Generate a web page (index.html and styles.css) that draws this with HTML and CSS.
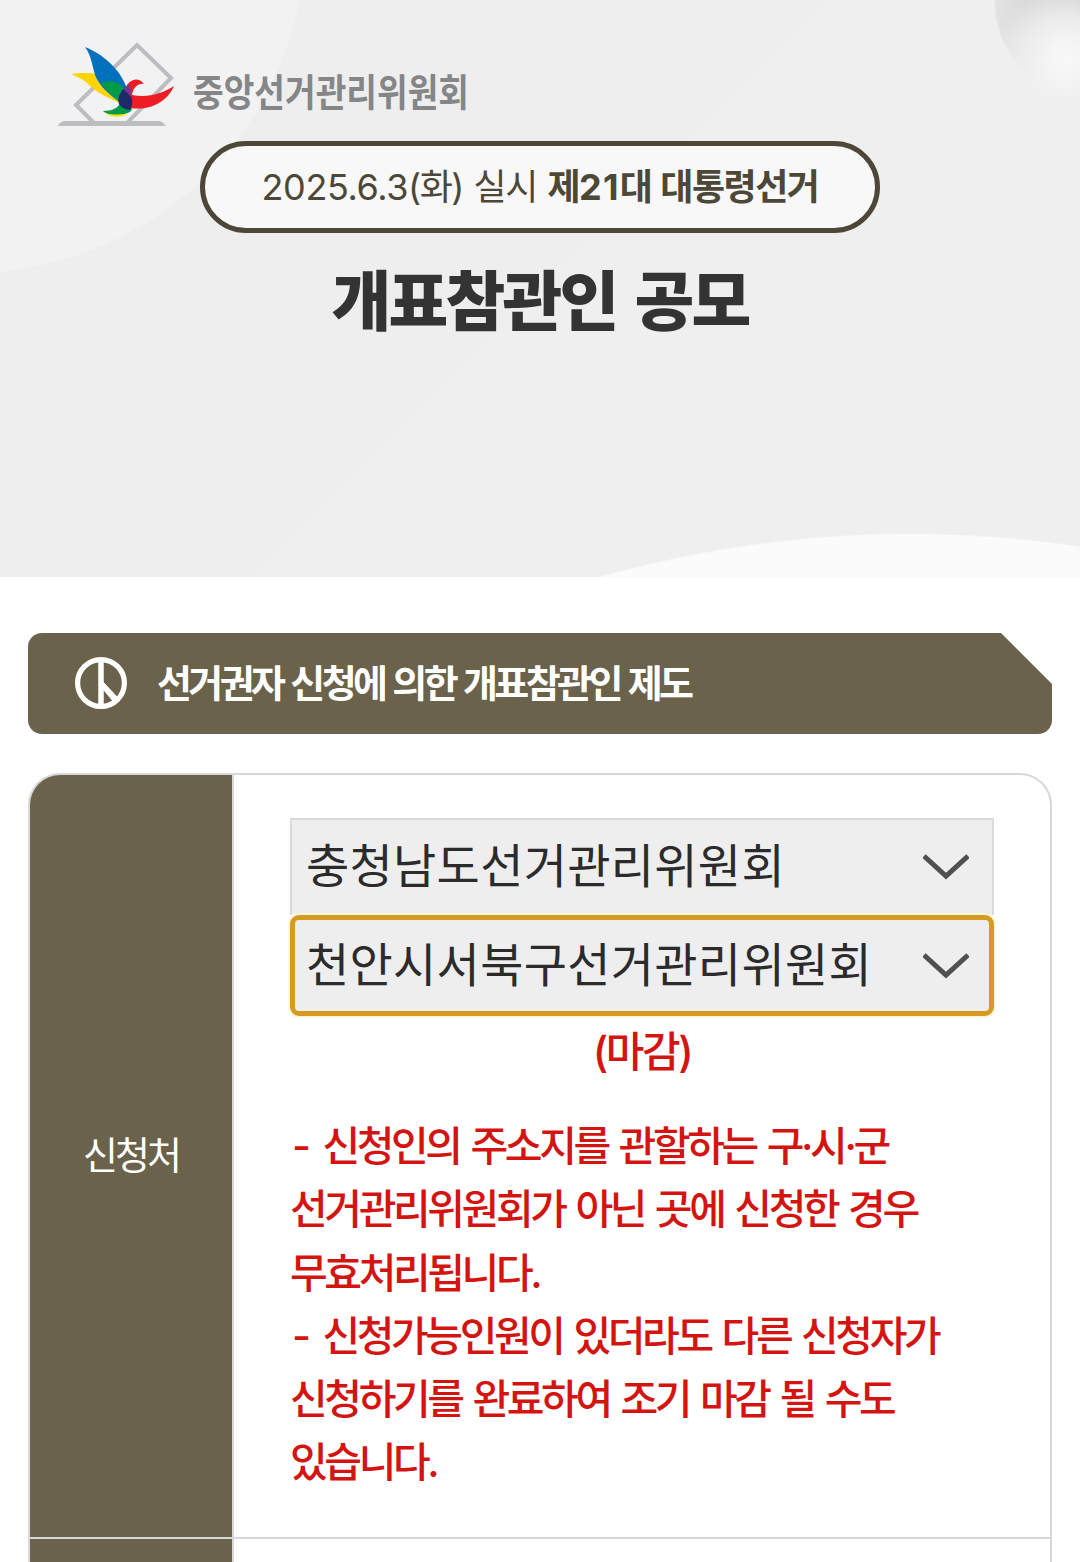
FILE: index.html
```html
<!DOCTYPE html>
<html lang="ko">
<head>
    <meta charset="UTF-8">
    <meta name="viewport" content="width=device-width, initial-scale=1.0">
    <title>개표참관인 공모</title>
    <link rel="stylesheet" href="styles.css">
</head>
<body>
    <header class="header">
        <div class="logo">
            <svg class="logo-mark" viewBox="0 0 120 88" width="120" height="88" aria-hidden="true">
                <path d="M37 84 L18 65 L79 5 L113 38 L68 84" fill="none" stroke="#bcbdc1" stroke-width="4"/>
                <path d="M0 86 Q3 81 7 81 H102 Q105 82 108 86 Z" fill="#bcbdc1"/>
                <path d="M13 34 C27 32 47 32 62 43 C66 50 67 60 62 63 C50 58 38 52 31 45 C26 39 19 37 13 34 Z" fill="#ffd500"/>
                <path d="M27 7 C43 13 63 29 69 49 C71 56 69 63 63 63 C50 54 41 45 37 35 C34 24 33 15 27 7 Z" fill="#0071bd"/>
                <path d="M43 43 C54 39 62 42 67 50 L63 63 C56 58 49 51 43 43 Z" fill="#009b48"/>
                <path d="M45 71 C54 71 62 68 63 60 C68 56 77 66 73 71 C67 76 51 77 45 71 Z" fill="#009b48"/>
                <path d="M47 73 C54 75 64 75 70 73 C64 79 52 77 47 73 Z" fill="#f4e500"/>
                <path d="M86 44 C80 43 75 48 74 55 C90 58 103 54 116 46 C109 62 92 71 72 68 C64 67 64 57 67 49 C71 39 80 36 86 44 Z" fill="#ee1c25"/>
                <path d="M65 49 C73 51 77 61 72 70 C61 69 56 61 65 49 Z" fill="#1c2b68"/>
                <path d="M66 50 L70 44 Q74 48 73 57 Q70 53 66 50 Z" fill="#83308c"/>
            </svg>
            <svg class="logo-name" width="280" height="50" role="img">
                <text x="0" y="36" textLength="276" lengthAdjust="spacingAndGlyphs">중앙선거관리위원회</text>
            </svg>
        </div>
        <p class="election"><span class="date">2025.6.3</span>(화) 실시 <strong>제<span class="round">21</span>대 대통령선거</strong></p>
        <h1 class="title">개표참관인 공모</h1>
    </header>

    <main class="content">
        <h2 class="section-title">
            <svg class="section-icon" viewBox="0 0 52 52" width="52" height="52" fill="none" stroke="#fff" aria-hidden="true">
                <circle cx="26" cy="26" r="23.4" stroke-width="5.2"/>
                <path d="M26 3 V49" stroke-width="5.5"/>
                <path d="M28 25 V32 L38 44 L42 40 Z" fill="#fff" stroke-width="1"/>
            </svg>
            <span>선거권자 신청에 의한 개표참관인 제도</span>
        </h2>

        <div class="table">
            <div class="row">
                <div class="label">신청처</div>
                <div class="cell">
                    <div class="select">
                        <span>충청남도선거관리위원회</span>
                        <svg class="arrow" viewBox="0 0 46 28" width="46" height="28"><path d="M1 3 L23 23 L45 3"/></svg>
                    </div>
                    <div class="select focused">
                        <span>천안시서북구선거관리위원회</span>
                        <svg class="arrow" viewBox="0 0 46 28" width="46" height="28"><path d="M1 3 L23 23 L45 3"/></svg>
                    </div>
                    <p class="closed">(마감)</p>
                    <p class="notice">
                        <span class="dash">-</span> 신청인의 주소지를 관할하는 구·시·군<br>
                        선거관리위원회가 아닌 곳에 신청한 경우<br>
                        무효처리됩니다.<br>
                        <span class="dash">-</span> 신청가능인원이 있더라도 다른 신청자가<br>
                        신청하기를 완료하여 조기 마감 될 수도<br>
                        있습니다.
                    </p>
                </div>
            </div>
            <div class="row next">
                <div class="label"></div>
                <div class="cell"></div>
            </div>
        </div>
    </main>
</body>
</html>
```
FILE: styles.css
```css
:root {
    --olive: #6a624a;
    --olive-dark: #4d4737;
    --line: #d8d8d8;
    --red: #d31411;
}

* {
    box-sizing: border-box;
}

body {
    margin: 0;
    background: #fff;
    font-family: Inter, "Noto Sans CJK KR", sans-serif;
    line-height: 1.2;
}

h1, h2, p {
    margin: 0;
}

/* Header with soft circles in the corners */
.header {
    display: flex;
    flex-direction: column;
    align-items: center;
    height: 577px;
    padding-top: 40px;
    background:
        radial-gradient(circle at 1066px 60px, #f8f8f8 0, #f4f4f4 20px, rgba(239, 239, 239, 0.8) 45px, rgba(238, 238, 238, 0) 72px),
        radial-gradient(circle at 1085px 3px, #d0d0d0 0, #d8d8d8 50px, #e2e2e2 89px, rgba(238, 238, 238, 0) 91px) 0 0 / 100% 76px no-repeat,
        radial-gradient(circle at 910px 1673px, #fbfbfb 1138px, rgba(251, 251, 251, 0) 1140px),
        radial-gradient(circle at -30px -62px, #f2f2f2 334px, rgba(242, 242, 242, 0) 336px),
        linear-gradient(135deg, #eee 50%, #efefef 50%);
}

.logo {
    display: flex;
    align-self: flex-start;
    height: 101px;
    margin-left: 58px;
}

.logo-name {
    margin: 30px 0 0 15px;
    overflow: visible;
    fill: #858688;
    font-size: 38px;
    font-weight: 700;
}

.election {
    display: flex;
    align-items: center;
    justify-content: center;
    width: 680px;
    height: 92px;
    padding-top: 2px;
    border: 5px solid var(--olive-dark);
    border-radius: 46px;
    background: #f8f8f8;
    color: var(--olive-dark);
    font-size: 36px;
    letter-spacing: -1.5px;
    word-spacing: 2px;
    white-space: pre;
}

.date {
    letter-spacing: -0.4px;
}

.round {
    letter-spacing: 1.2px;
}

.title {
    margin-top: 21px;
    color: #333;
    font-size: 65px;
    font-weight: 900;
    line-height: 96px;
    letter-spacing: -2.8px;
    word-spacing: 8px;
}

.content {
    padding: 56px 28px 0;
}

/* Top right corner is cut off */
.section-title {
    display: flex;
    align-items: center;
    height: 101px;
    padding-left: 47px;
    border-radius: 14px;
    background: var(--olive);
    clip-path: polygon(0 0, 973px 0, 100% 51px, 100% 100%, 0 100%);
    color: #fff;
    font-size: 38px;
    font-weight: 700;
    letter-spacing: -3.6px;
    word-spacing: 2.5px;
}

.section-icon {
    margin: 0 30px 2px 0;
}

.table {
    margin-top: 39px;
    border: 2px solid var(--line);
    border-bottom: 0;
    border-radius: 32px 32px 0 0;
    overflow: hidden;
}

.row {
    display: grid;
    grid-template-columns: 204px 1fr;
    height: 764px;
    border-bottom: 2px solid var(--line);
}

.row.next {
    height: 23px;
    border-bottom: 0;
}

.next .cell {
    padding: 0;
}

.label {
    display: flex;
    align-items: center;
    justify-content: center;
    border-right: 2px solid var(--line);
    background: var(--olive);
    color: #fff;
    font-size: 38px;
    letter-spacing: -3px;
}

.cell {
    padding: 43px 56px 0;
}

.select {
    display: flex;
    align-items: center;
    justify-content: space-between;
    height: 97px;
    padding: 0 23px 5px 14px;
    border: 2px solid #dadada;
    border-bottom: 0;
    background: #eee;
    color: #2b2b2b;
    font-size: 47px;
    letter-spacing: 0.3px;
    line-height: 1;
}

.select.focused {
    height: 101px;
    padding: 0 20px 3px 11px;
    border: 5px solid #d59a20;
    border-radius: 9px;
    box-shadow: 0 0 0 2px #fff6dc;
}

.arrow {
    margin-top: 3px;
    fill: none;
    stroke: #505050;
    stroke-width: 5;
}

.closed {
    padding-top: 1px;
    color: var(--red);
    font-size: 42px;
    font-weight: 500;
    line-height: 70px;
    letter-spacing: -2.4px;
    text-align: center;
}

.notice {
    margin-top: 28px;
    color: var(--red);
    font-size: 41px;
    font-weight: 500;
    line-height: 63.3px;
    letter-spacing: -3.4px;
    word-spacing: 3.3px;
    white-space: nowrap;
}

.dash {
    margin: 0 4px 0 2px;
}
```
